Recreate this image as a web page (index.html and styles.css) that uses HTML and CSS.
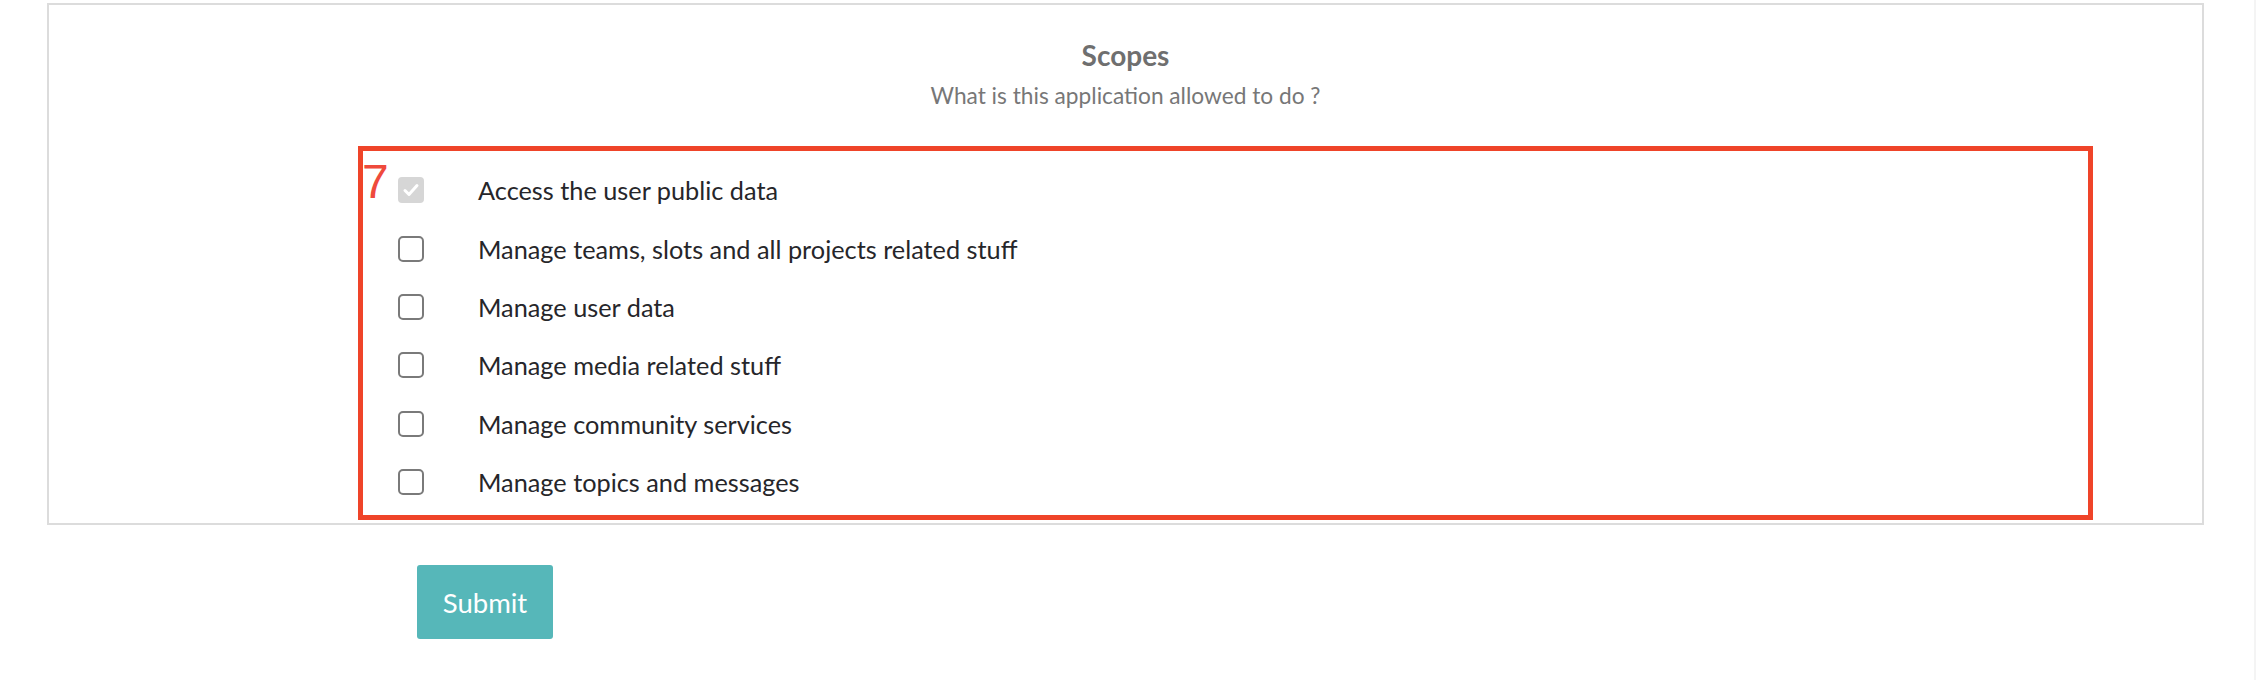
FILE: index.html
```html
<!DOCTYPE html>
<html lang="en">
<head>
<meta charset="utf-8">
<title>Scopes</title>
<link rel="stylesheet" href="styles.css">
</head>
<body>
<div class="page">
  <section class="card">
    <h2 class="title">Scopes</h2>
    <p class="subtitle">What is this application allowed to do ?</p>
    <div class="scopes">
      <span class="marker">7</span>
      <label class="scope"><input type="checkbox" class="cb" checked disabled><span class="label">Access the user public data</span></label>
      <label class="scope"><input type="checkbox" class="cb"><span class="label">Manage teams, slots and all projects related stuff</span></label>
      <label class="scope"><input type="checkbox" class="cb"><span class="label">Manage user data</span></label>
      <label class="scope"><input type="checkbox" class="cb"><span class="label">Manage media related stuff</span></label>
      <label class="scope"><input type="checkbox" class="cb"><span class="label">Manage community services</span></label>
      <label class="scope"><input type="checkbox" class="cb"><span class="label">Manage topics and messages</span></label>
    </div>
  </section>
  <div class="actions">
    <button type="button" class="submit">Submit</button>
  </div>
</div>
</body>
</html>
```

FILE: styles.css
```css
html, body {
  margin: 0;
  padding: 0;
  background: #ffffff;
}

body {
  font-family: Lato, "Liberation Sans", sans-serif;
  width: 2256px;
  height: 680px;
  overflow: hidden;
}

.page {
  box-sizing: border-box;
  height: 680px;
  padding-top: 3px;
  border-right: 2px solid #f4f4f4;
}

.card {
  box-sizing: border-box;
  margin-left: 47px;
  width: 2157px;
  height: 522px;
  border: 2px solid #dcdcdc;
  display: flex;
  flex-direction: column;
  align-items: center;
}

.title {
  margin: 33px 0 0;
  font-size: 28px;
  line-height: 34px;
  font-weight: 700;
  color: #6f6f6f;
}

.subtitle {
  margin: 10px 0 0;
  font-size: 22.7px;
  line-height: 28px;
  font-weight: 400;
  color: #777777;
}

.scopes {
  position: relative;
  box-sizing: border-box;
  align-self: flex-start;
  margin: 36px 0 0 309px;
  width: 1735px;
  height: 374px;
  border: 5px solid #ef4429;
  padding: 10px 0 0 35px;
  display: flex;
  flex-direction: column;
}

.marker {
  position: absolute;
  left: -1px;
  top: 6px;
  font-family: "Liberation Sans", sans-serif;
  font-size: 48px;
  line-height: 50px;
  color: #ef4a3c;
}

.scope {
  height: 58.4px;
  display: flex;
  align-items: center;
  gap: 54px;
}

.cb {
  appearance: none;
  -webkit-appearance: none;
  margin: 0;
  box-sizing: border-box;
  width: 26px;
  height: 26px;
  border: 2px solid #7a7a7a;
  border-radius: 5px;
  background: #ffffff;
  flex: none;
}

.cb:checked {
  border: none;
  background-color: #d6d6d6;
  background-image: url("data:image/svg+xml,%3Csvg xmlns='http://www.w3.org/2000/svg' viewBox='0 0 26 26'%3E%3Cpath d='M7 13.5l4 4 8-9' fill='none' stroke='%23ffffff' stroke-width='3' stroke-linecap='round' stroke-linejoin='round'/%3E%3C/svg%3E");
  background-size: 26px 26px;
  border-radius: 4px;
}

.label {
  font-size: 25.3px;
  color: #26262a;
}

.actions {
  padding: 40px 0 0 417px;
}

.submit {
  box-sizing: border-box;
  width: 136px;
  height: 74px;
  border: none;
  border-radius: 3px;
  background: #56b7b9;
  color: #ffffff;
  font-family: Lato, "Liberation Sans", sans-serif;
  font-size: 27.5px;
  padding: 0;
}
```
